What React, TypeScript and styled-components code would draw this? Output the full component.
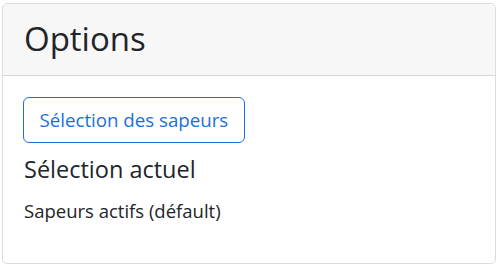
import React from "react";
import styled, { createGlobalStyle } from "styled-components";

const Global = createGlobalStyle`
  html, body { margin: 0; padding: 0; background: #fff; }
  body { font-family: "Open Sans", "Noto Sans", sans-serif; color: #212529; }
  * { box-sizing: border-box; }
`;

const Page = styled.div`
  padding: 3px 1px 0 2px;
`;

const Card = styled.section`
  display: flex;
  flex-direction: column;
  height: 261px;
  border: 1px solid #dcdcdc;
  border-radius: 5px;
  overflow: hidden;
  background: #fff;
`;

const CardHeader = styled.header`
  background: #f7f7f7;
  border-bottom: 1px solid #d8d8d8;
  height: 72px;
  padding: 15px 21px 0;
`;

const Title = styled.h2`
  margin: 0;
  font-size: 33px;
  font-weight: 400;
  line-height: 1.2;
`;

const CardBody = styled.div`
  padding: 21px 20px;
  display: flex;
  flex-direction: column;
  align-items: flex-start;
`;

const OutlineButton = styled.button`
  font-family: inherit;
  font-size: 18.7px;
  line-height: 1.5;
  height: 46px;
  padding: 0 15.5px;
  color: #1a6fdc;
  background: #fff;
  border: 1px solid #1a6fdc;
  border-radius: 6px;
  cursor: pointer;
`;

const SubTitle = styled.h5`
  margin: 12px 0 0 1px;
  font-size: 23.5px;
  font-weight: 400;
  line-height: 1.2;
`;

const Text = styled.p`
  margin: 14px 0 0 1px;
  font-size: 18.5px;
  line-height: 1.5;
`;

export default function App() {
  return (
    <>
      <Global />
      <Page>
        <Card>
          <CardHeader>
            <Title>Options</Title>
          </CardHeader>
          <CardBody>
            <OutlineButton type="button">Sélection des sapeurs</OutlineButton>
            <SubTitle>Sélection actuel</SubTitle>
            <Text>Sapeurs actifs (défault)</Text>
          </CardBody>
        </Card>
      </Page>
    </>
  );
}
